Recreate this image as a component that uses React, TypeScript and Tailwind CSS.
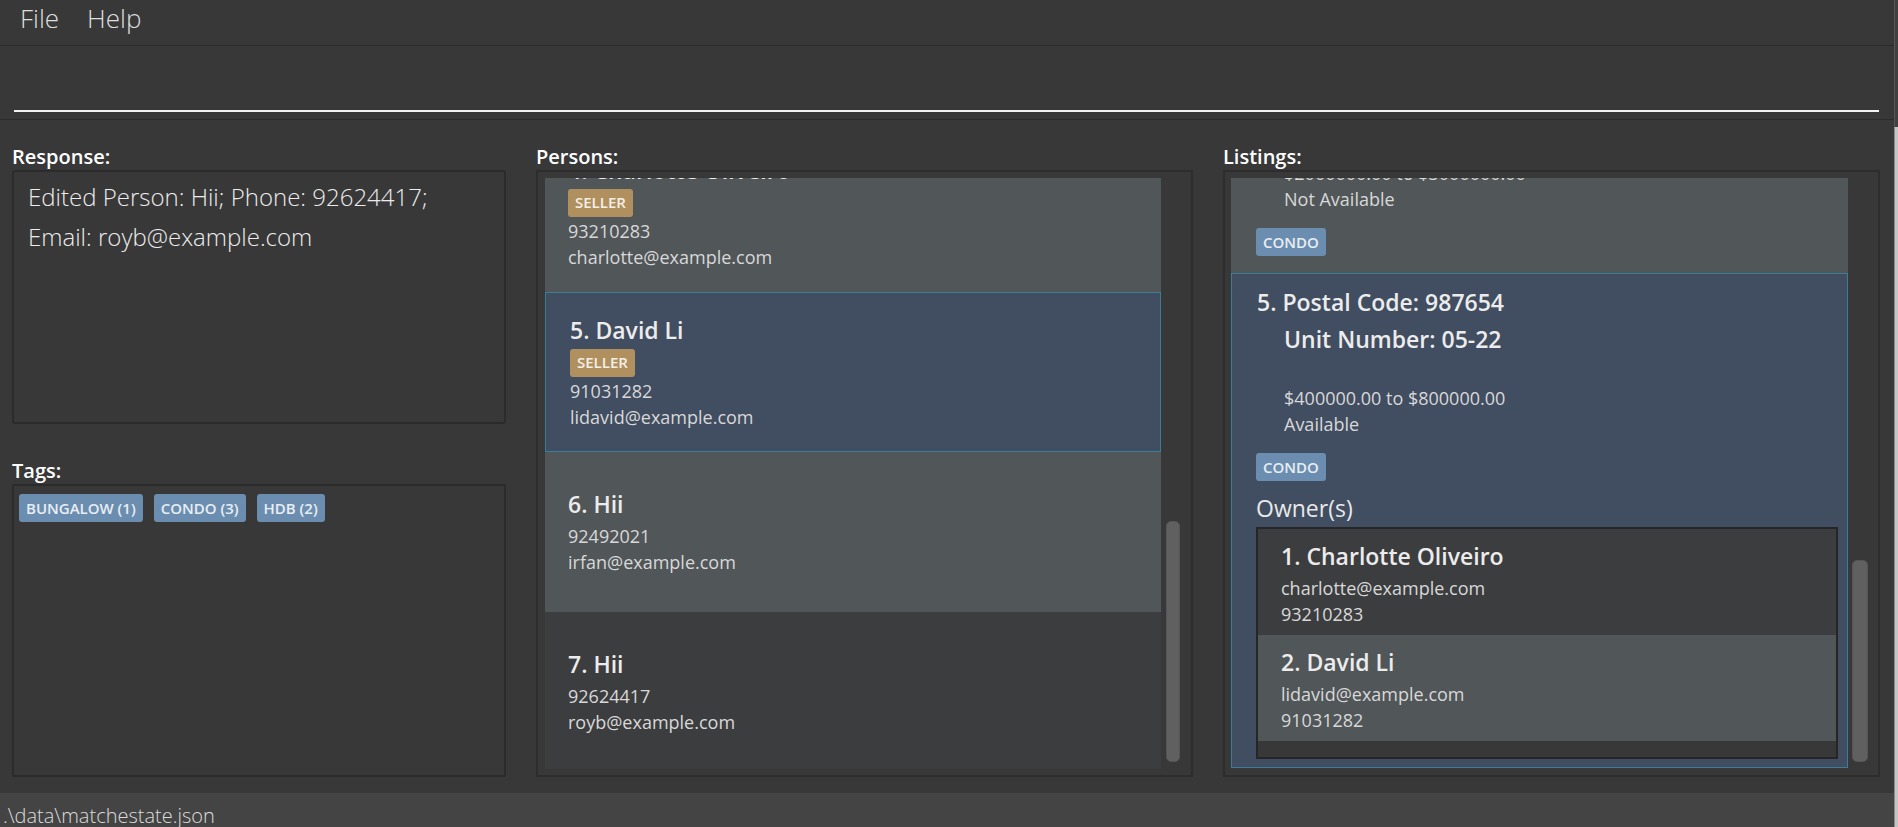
import React from "react";

const font = "font-['Open_Sans',_'Noto_Sans',_sans-serif]";

function Chip({ label, kind }: { label: string; kind: "seller" | "tag" }) {
  return (
    <div
      className={
        "self-start inline-flex items-center h-[28px] px-[7px] rounded-[3px] text-[15px] font-semibold leading-none " +
        (kind === "seller" ? "bg-[#b0905f] text-[#f4efe6]" : "bg-[#6b8daf] text-[#e9eef4]")
      }
    >
      {label}
    </div>
  );
}

type Person = { name: string; phone: string; email: string; seller?: boolean; bg: string; selected?: boolean };

function PersonCard({ p }: { p: Person }) {
  return (
    <div
      className={
        "h-[160px] shrink-0 flex flex-col justify-center " +
        (p.selected ? "border border-[#3b7d97] bg-[#414d60] pl-[24px]" : p.bg + " pl-[23px]")
      }
    >
      <div className="text-[23px] font-semibold leading-[30px] text-[#ececec] mb-[4px]">{p.name}</div>
      {p.seller && (
        <div className="mb-[1px] flex">
          <Chip label="SELLER" kind="seller" />
        </div>
      )}
      <div className="text-[18px] leading-[26px] text-[#d8d8d8]">{p.phone}</div>
      <div className="text-[18px] leading-[26px] text-[#d8d8d8]">{p.email}</div>
    </div>
  );
}

function Owner({ name, email, phone, bg }: { name: string; email: string; phone: string; bg: string }) {
  return (
    <div className={"h-[106px] pl-[23px] pt-[12px] " + bg}>
      <div className="text-[23px] font-semibold leading-[30px] text-[#ececec]">{name}</div>
      <div className="mt-[4px] text-[18px] leading-[26px] text-[#d8d8d8]">{email}</div>
      <div className="text-[18px] leading-[26px] text-[#d8d8d8]">{phone}</div>
    </div>
  );
}

export default function App() {
  const persons: Person[] = [
    { name: "4. Charlotte Oliveiro", phone: "93210283", email: "charlotte@example.com", seller: true, bg: "bg-[#515658]" },
    { name: "5. David Li", phone: "91031282", email: "lidavid@example.com", seller: true, bg: "bg-[#414d60]", selected: true },
    { name: "6. Hii", phone: "92492021", email: "irfan@example.com", bg: "bg-[#515658]" },
    { name: "7. Hii", phone: "92624417", email: "royb@example.com", bg: "bg-[#3c3d3f]" },
  ];

  return (
    <div className={"h-[827px] w-full flex bg-[#383838] overflow-hidden text-[#e8e8e8] " + font}>
      <div className="flex-1 min-w-0 flex flex-col">
        {/* Menu bar */}
        <div className="h-[46px] shrink-0 border-b border-[#2b2b2b] flex items-start pt-[5px] pl-[20px] gap-[28px] text-[26px] leading-[26px] font-light text-[#dedede]">
          <span>File</span>
          <span>Help</span>
        </div>

        {/* Command box */}
        <div className="h-[74px] shrink-0 border-b border-[#2b2b2b] pl-[14px] pr-[15px]">
          <div className="h-[66px] border-b-2 border-[#f2f2f2]" />
        </div>

        {/* Main */}
        <div className="flex-1 min-h-0 flex gap-[30px] pl-[12px] pr-[14px] pt-[23px] pb-[16px]">
          {/* Left column */}
          <div className="w-[494px] shrink-0 flex flex-col">
            <div className="h-[27px] text-[20px] font-semibold leading-[27px] text-white">Response:</div>
            <div className="h-[254px] border-2 border-[#2b2b2b] rounded-[3px] pl-[14px] pt-[5px] text-[24px] font-light leading-[40px] text-[#ececec]">
              <div>Edited Person: Hii; Phone: 92624417;</div>
              <div>Email: royb@example.com</div>
            </div>
            <div className="mt-[33px] h-[27px] text-[20px] font-semibold leading-[27px] text-white">Tags:</div>
            <div className="flex-1 border-2 border-[#2b2b2b] rounded-[2px] pl-[5px] pt-[8px] flex items-start gap-[11px]">
              <Chip label="BUNGALOW (1)" kind="tag" />
              <Chip label="CONDO (3)" kind="tag" />
              <Chip label="HDB (2)" kind="tag" />
            </div>
          </div>

          {/* Persons */}
          <div className="w-[657px] shrink-0 flex flex-col">
            <div className="h-[27px] text-[20px] font-semibold leading-[27px] text-white">Persons:</div>
            <div className="flex-1 min-h-0 border-2 border-[#2d2d2d] flex pl-[7px] pr-[11px] pt-[6px] pb-[6px] gap-[5px]">
              <div className="flex-1 min-w-0 overflow-hidden">
                <div className="-mt-[46px] flex flex-col">
                  {persons.map((p) => (
                    <PersonCard key={p.name} p={p} />
                  ))}
                </div>
              </div>
              <div className="w-[14px] flex flex-col justify-end pb-[7px]">
                <div className="h-[241px] rounded-[5px] bg-[#606060] border border-[#555]" />
              </div>
            </div>
          </div>

          {/* Listings */}
          <div className="flex-1 min-w-0 flex flex-col">
            <div className="h-[27px] text-[20px] font-semibold leading-[27px] text-white">Listings:</div>
            <div className="flex-1 min-h-0 border-2 border-[#2d2d2d] flex pl-[6px] pr-[10px] pt-[6px] pb-[6px] gap-[4px]">
              <div className="flex-1 min-w-0 overflow-hidden flex flex-col">
                {/* partially scrolled card 4 */}
                <div className="h-[95px] shrink-0 bg-[#515658] overflow-hidden pl-[25px]">
                  <div className="-mt-[18px] ml-[28px] text-[18px] leading-[26px] text-[#d8d8d8]">$2000000.00 to $3000000.00</div>
                  <div className="ml-[28px] text-[18px] leading-[26px] text-[#d8d8d8]">Not Available</div>
                  <div className="mt-[16px] flex">
                    <Chip label="CONDO" kind="tag" />
                  </div>
                </div>
                {/* selected card 5 */}
                <div className="shrink-0 border border-[#3b7d97] bg-[#414d60] pl-[24px] pr-[9px] pt-[13px] pb-[8px]">
                  <div className="ml-[1px] text-[23px] font-semibold leading-[30px] text-[#ececec]">5. Postal Code: 987654</div>
                  <div className="mt-[7px] ml-[28px] text-[23px] font-semibold leading-[30px] text-[#ececec]">Unit Number: 05-22</div>
                  <div className="mt-[31px] ml-[28px] text-[18px] leading-[26px] text-[#d8d8d8]">$400000.00 to $800000.00</div>
                  <div className="ml-[28px] text-[18px] leading-[26px] text-[#d8d8d8]">Available</div>
                  <div className="mt-[16px] flex">
                    <Chip label="CONDO" kind="tag" />
                  </div>
                  <div className="mt-[12px] text-[23px] leading-[30px] text-[#e8e8e8]">Owner(s)</div>
                  <div className="mt-[4px] h-[232px] border-2 border-[#262626] bg-[#383838] flex flex-col">
                    <Owner name="1. Charlotte Oliveiro" email="charlotte@example.com" phone="93210283" bg="bg-[#3c3d3f]" />
                    <Owner name="2. David Li" email="lidavid@example.com" phone="91031282" bg="bg-[#515658]" />
                  </div>
                </div>
              </div>
              <div className="w-[16px] flex flex-col justify-end pb-[7px]">
                <div className="h-[202px] rounded-[5px] bg-[#606060] border border-[#555]" />
              </div>
            </div>
          </div>
        </div>

        {/* Status bar */}
        <div className="h-[34px] shrink-0 bg-[#444444] pl-[3px] pt-[13px] text-[20px] font-light leading-[20px] text-[#dcdcdc] whitespace-nowrap overflow-hidden">
          .\data\matchestate.json
        </div>
      </div>

      {/* window edge strip */}
      <div className="w-[4px] shrink-0 flex flex-col">
        <div className="h-[127px] bg-[#404040] border-l border-[#555]" />
        <div className="flex-1 bg-[#c4c4c4] border-l border-[#8a8a8a]" />
      </div>
    </div>
  );
}
